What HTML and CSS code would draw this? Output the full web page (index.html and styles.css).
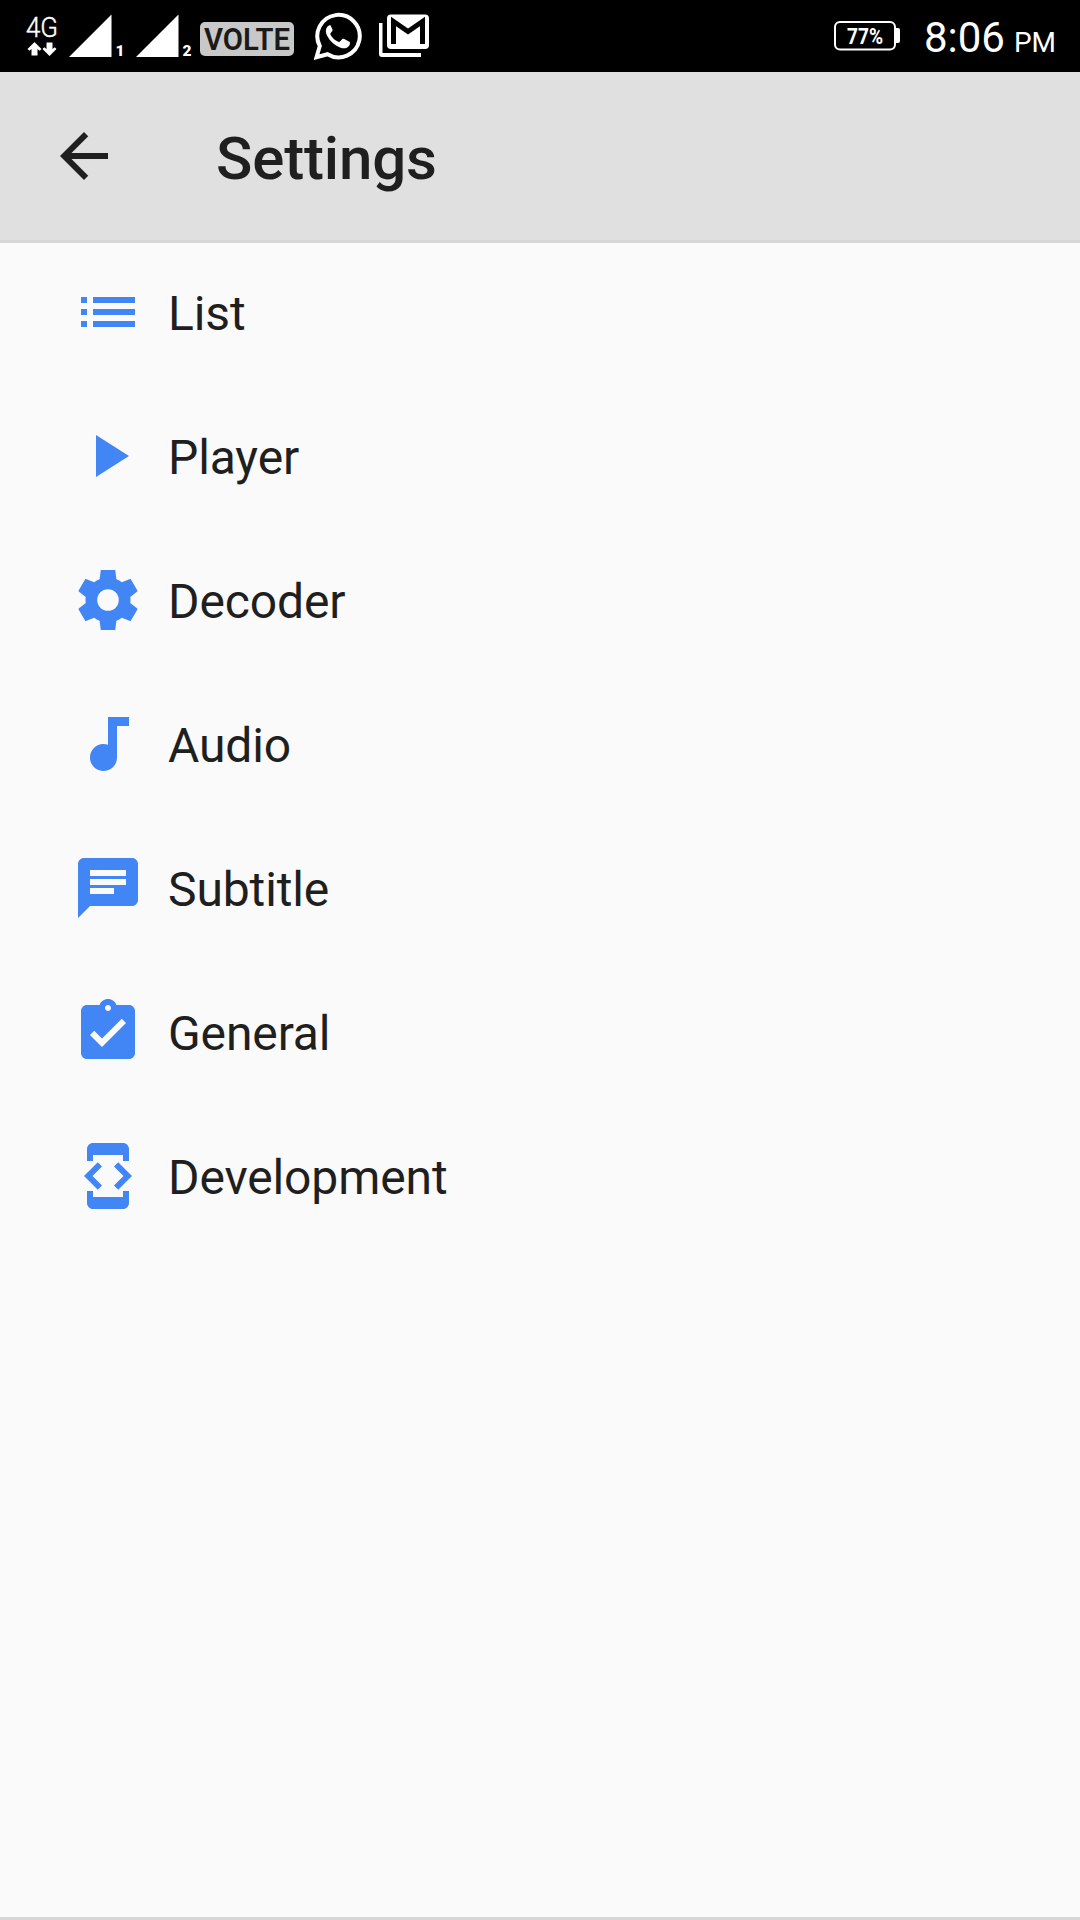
FILE: index.html
```html
<!DOCTYPE html>
<html lang="en">
<head>
<meta charset="utf-8">
<title>Settings</title>
<link rel="stylesheet" href="styles.css">
</head>
<body>
<div class="screen">
  <div class="status-bar">
    <div class="status-left">
      <svg class="net" width="36" height="72" viewBox="0 0 36 72">
        <text class="net-label" x="1" y="37" textLength="32" lengthAdjust="spacingAndGlyphs">4G</text>
        <path d="M9.500 42l7 7-1.800 1.800-2.200-1.800v6.500h-6v-6.500l-2.200 1.800L2.500 49zM24.500 56l7-7-1.800-1.800-2.200 1.800v-6.500h-6v6.500l-2.200-1.800L17.500 49z"/>
      </svg>
      <svg class="signal" width="58" height="72" viewBox="0 0 58 72">
        <path d="M0 57L42.500 14.500V57z"/>
        <text class="sim" x="46.500" y="56">1</text>
      </svg>
      <svg class="signal" width="58" height="72" viewBox="0 0 58 72">
        <path d="M0 57L42.500 14.500V57z"/>
        <text class="sim" x="46.500" y="56">2</text>
      </svg>
      <svg class="volte" width="96" height="72" viewBox="0 0 96 72">
        <rect x="1" y="22" width="94" height="34" rx="5"/>
        <text class="volte-label" x="5" y="50" textLength="86" lengthAdjust="spacingAndGlyphs">VOLTE</text>
      </svg>
      <svg class="whatsapp" width="48" height="48" viewBox="0 0 48 48">
        <path class="ring" d="M2.500 45.200L5.800 34A21.200 21.200 0 1 1 13.500 42.200z"/>
        <path d="M16.500 13.200c-1.200-.2-2.300.4-3.200 1.500-2 2.500-1.800 5.900-.2 9 3 5.700 7.500 9.800 13.500 12 3.300 1.200 7 .4 8.700-2.300.7-1.200.8-2.500.5-3.500l-6-3.100c-.9-.3-1.500 0-2 .6l-1.800 2.200c-.5.5-1 .5-1.700.2-3.400-1.500-6-3.900-7.800-7.100-.3-.6-.2-1.100.2-1.600l1.600-2c.3-.5.4-1 .2-1.600z"/>
      </svg>
      <svg class="gmail" width="50" height="44" viewBox="0 0 50 44">
        <path d="M0 9h3.500v30H42v4H3a3 3 0 0 1-3-3z"/>
        <rect x="8" y="0.500" width="42" height="34.500" rx="4"/>
        <path class="gmail-m" d="M14.500 30V7.500L29 17.500 43.500 7.500V30"/>
      </svg>
    </div>
    <div class="status-right">
      <svg class="battery" width="66" height="30" viewBox="0 0 66 30">
        <rect class="battery-shell" x="1" y="1" width="60" height="27.500" rx="5"/>
        <path d="M61.500 7H64a2 2 0 0 1 2 2v11a2 2 0 0 1-2 2h-2.500z"/>
        <text class="battery-label" x="13" y="23" textLength="36" lengthAdjust="spacingAndGlyphs">77%</text>
      </svg>
      <div class="clock">8:06 <span class="meridiem">PM</span></div>
    </div>
  </div>

  <header class="app-bar">
    <svg class="icon back" viewBox="0 0 24 24"><path d="M20 11H7.830l5.590-5.590L12 4l-8 8 8 8 1.410-1.410L7.830 13H20z"/></svg>
    <h1 class="title">Settings</h1>
  </header>

  <ul class="menu">
    <li class="row">
      <svg class="icon" viewBox="0 0 24 24"><path d="M3 7h2v2H3zM3 11h2v2H3zM3 15h2v2H3zM7 7h14v2H7zM7 11h14v2H7zM7 15h14v2H7z"/></svg>
      <span class="label">List</span>
    </li>
    <li class="row">
      <svg class="icon" viewBox="0 0 24 24"><path d="M8 5v14l11-7z"/></svg>
      <span class="label">Player</span>
    </li>
    <li class="row">
      <svg class="icon" viewBox="0 0 24 24"><path fill-rule="evenodd" d="M14.400 2l.4 3.100c.7.250 1.280.6 1.800 1l2.750-1.130q.17-.06.26.1l2.180 3.800q.1.160-.05.280L19.430 11c.05.32.07.66.07 1s-.02.68-.07 1l2.310 1.850q.15.120.05.280l-2.180 3.800q-.09.160-.26.1L16.600 17.900c-.52.4-1.100.75-1.800 1L14.400 22H9.600l-.4-3.100c-.7-.250-1.280-.6-1.800-1l-2.750 1.130q-.17.060-.26-.1l-2.180-3.800q-.1-.160.050-.280L4.570 13c-.05-.32-.07-.66-.07-1s.02-.68.07-1L2.260 9.150q-.15-.120-.05-.280l2.180-3.800q.09-.160.26-.1L7.400 6.100c.52-.4 1.100-.75 1.800-1L9.600 2zM12 8.400a3.600 3.600 0 1 0 0 7.200 3.600 3.600 0 0 0 0-7.200z"/></svg>
      <span class="label">Decoder</span>
    </li>
    <li class="row">
      <svg class="icon" viewBox="0 0 24 24"><path d="M12 3v9.260c-.5-.17-1-.26-1.500-.26C8.010 12 6 14.010 6 16.500S8.010 21 10.500 21s4.500-2.010 4.500-4.500V6h4V3z"/></svg>
      <span class="label">Audio</span>
    </li>
    <li class="row">
      <svg class="icon" viewBox="0 0 24 24"><path d="M20 2H4c-1.100 0-1.990.9-1.990 2L2 22l4-4h14c1.100 0 2-.9 2-2V4c0-1.100-.9-2-2-2zM6 9h12v2H6V9zm8 5H6v-2h8v2zm4-6H6V6h12v2z"/></svg>
      <span class="label">Subtitle</span>
    </li>
    <li class="row">
      <svg class="icon" viewBox="0 0 24 24"><path d="M19 3h-4.180C14.400 1.840 13.300 1 12 1c-1.300 0-2.400.84-2.820 2H5c-1.100 0-2 .9-2 2v14c0 1.100.9 2 2 2h14c1.100 0 2-.9 2-2V5c0-1.100-.9-2-2-2zm-7 0c.55 0 1 .45 1 1s-.45 1-1 1-1-.45-1-1 .45-1 1-1zm-2 14l-4-4 1.410-1.410L10 14.170l6.590-6.590L18 9l-8 8z"/></svg>
      <span class="label">General</span>
    </li>
    <li class="row">
      <svg class="icon" viewBox="0 0 24 24"><path d="M7 5h10v2h2V3c0-1.100-.9-1.990-2-1.990L7 1c-1.100 0-2 .9-2 2v4h2V5zm8.410 11.590L20 12l-4.590-4.590L14 8.830 17.170 12 14 15.170l1.410 1.420zM10 15.170L6.830 12 10 8.830 8.590 7.410 4 12l4.590 4.590L10 15.170zM17 19H7v-2H5v4c0 1.100.9 2 2 2h10c1.100 0 2-.9 2-2v-4h-2v2z"/></svg>
      <span class="label">Development</span>
    </li>
  </ul>
</div>
</body>
</html>
```
FILE: styles.css
```css
* {
  box-sizing: border-box;
}

body {
  margin: 0;
  background: #fafafa;
  color: #1f1f1f;
  font-family: Roboto, "Noto Sans", sans-serif;
}

.screen {
  display: flex;
  flex-direction: column;
  width: 1080px;
  height: 1920px;
  border-bottom: 3px solid #d6d6d6;
}

.status-bar {
  display: flex;
  justify-content: space-between;
  height: 72px;
  padding: 0 24px 0 25px;
  background: #000;
  color: #fff;
  fill: #fff;
}

.status-left,
.status-right {
  display: flex;
  align-items: flex-start;
}

.status-left svg,
.status-right svg {
  display: block;
  flex: none;
}

.net {
  margin-right: 8px;
}

.net-label {
  font-size: 27px;
  font-weight: 300;
  stroke: #fff;
  stroke-width: 0.4;
}

.signal {
  margin-right: 9px;
}

.sim {
  font-size: 15.5px;
  font-weight: 900;
}

.volte {
  margin: 0 19px 0 -4px;
  fill: #c8c8c8;
}

.volte-label {
  fill: #1a1a1a;
  font-size: 31px;
  font-weight: 600;
}

.whatsapp {
  margin: 12px 17px 0 0;
}

.ring {
  fill: none;
  stroke: #fff;
  stroke-width: 4;
}

.gmail {
  margin-top: 14px;
}

.gmail-m {
  fill: none;
  stroke: #000;
  stroke-width: 5;
}

.battery {
  margin: 21px 24px 0 0;
}

.battery-shell {
  fill: none;
  stroke: #fff;
  stroke-width: 2;
}

.battery-label {
  font-size: 22px;
  font-weight: 700;
}

.clock {
  font-size: 42px;
  line-height: 75px;
  white-space: nowrap;
  word-spacing: -1.5px;
}

.meridiem {
  font-size: 28px;
}

.app-bar {
  display: flex;
  align-items: center;
  height: 168px;
  padding-left: 48px;
  background: #e0e0e0;
  box-shadow: 0 3px #d6d6d6;
}

.icon {
  display: block;
  flex: none;
  width: 72px;
  height: 72px;
  fill: #4285f4;
}

.back {
  fill: #1f1f1f;
}

.title {
  margin: 0 0 0 96px;
  padding-top: 5px;
  font-size: 60px;
  font-weight: 500;
  line-height: 70px;
  letter-spacing: -0.15px;
}

.menu {
  margin: 0;
  padding: 0;
  list-style: none;
}

.row {
  display: flex;
  align-items: center;
  gap: 24px;
  height: 144px;
  padding-left: 72px;
}

.label {
  padding-top: 3px;
  font-size: 48px;
  line-height: 56px;
  letter-spacing: -0.12px;
}
```
